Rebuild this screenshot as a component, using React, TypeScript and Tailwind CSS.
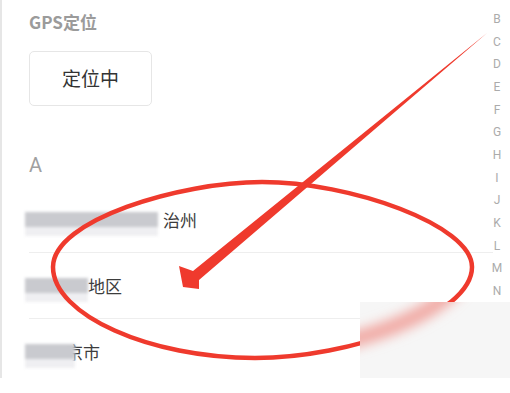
import React from 'react';

const cjk = { fontFamily: '"Noto Sans CJK SC", "Noto Sans", sans-serif' };

const letters = ['B', 'C', 'D', 'E', 'F', 'G', 'H', 'I', 'J', 'K', 'L', 'M', 'N'];

const ellipse =
  'M 53 267 C 53 220, 180 182, 262 182 C 350 182, 472 225, 472 267 C 472 315, 350 358, 255 358 C 150 358, 53 315, 53 267 Z';

const Censor = ({ width, className = '' }: { width: string; className?: string }) => (
  <span className={`relative inline-block h-[15px] -ml-[4px] blur-[1.5px] bg-[#c9cacf] ${width} ${className}`}>
    <span className="absolute left-0 right-0 top-[15px] h-[9px] bg-[#efeff2]" />
  </span>
);

const Row = ({ children }: { children: React.ReactNode }) => (
  <div className="flex items-center h-[66px] border-b border-[#eeeeee]">{children}</div>
);

const App = () => {
  return (
    <div className="relative w-[510px] h-[393px] bg-white overflow-hidden" style={cjk}>
      <div className="h-[378px] border-l-2 border-[#e6e6e6] pl-[27px] pr-[17px] overflow-hidden">
        <p className="pt-[11px] text-[17px] leading-[22px] font-bold text-[#9b9b9b]">GPS定位</p>
        <button className="mt-[18px] w-[123px] h-[55px] rounded-[5px] border border-[#e6e6e6] text-[19px] text-[#333333]">
          定位中
        </button>
        <p className="mt-[46px] text-[20px] leading-[26px] text-[#a0a0a0]" style={{ fontFamily: 'Roboto, sans-serif' }}>A</p>
        <div className="mt-[9px] text-[17px] text-[#3d3d3d]">
          <Row>
            <Censor width="w-[133px]" />
            <span className="ml-[5px]">治州</span>
          </Row>
          <Row>
            <Censor width="w-[63px]" />
            <span>地区</span>
          </Row>
          <div className="flex items-center h-[66px] border-b border-[#eeeeee] mr-[116px]">
            <Censor width="w-[50px]" className="z-10" />
            <span className="-ml-[9px]">京市</span>
          </div>
        </div>
      </div>

      <div
        className="absolute left-[489px] top-[8px] w-[16px] flex flex-col text-center text-[12px] leading-[22.67px] text-[#ababab]"
        style={{ fontFamily: 'Roboto, sans-serif' }}
      >
        {letters.map((l) => (
          <span key={l}>{l}</span>
        ))}
      </div>

      <svg className="absolute inset-0 pointer-events-none" width="510" height="393" viewBox="0 0 510 393">
        <path d={ellipse} fill="none" stroke="#ef3a2d" strokeWidth="4.5" />
        <polygon points="487,33 199,280 199,289 183,287 179,266 193,271" fill="#ef3a2d" />
      </svg>

      <div className="absolute left-[360px] top-[302px] w-[150px] h-[76px] bg-[#f6f6f6]" />

      <svg className="absolute inset-0 pointer-events-none" width="510" height="393" viewBox="0 0 510 393">
        <defs>
          <clipPath id="patch">
            <rect x="360" y="302" width="150" height="76" />
          </clipPath>
          <filter id="smear" x="-20%" y="-20%" width="140%" height="140%">
            <feGaussianBlur stdDeviation="6" />
          </filter>
        </defs>
        <g clipPath="url(#patch)">
          <path d={ellipse} fill="none" stroke="#f1aaa5" strokeWidth="16" filter="url(#smear)" transform="translate(-6 -4)" />
        </g>
      </svg>
    </div>
  );
};

export default App;
